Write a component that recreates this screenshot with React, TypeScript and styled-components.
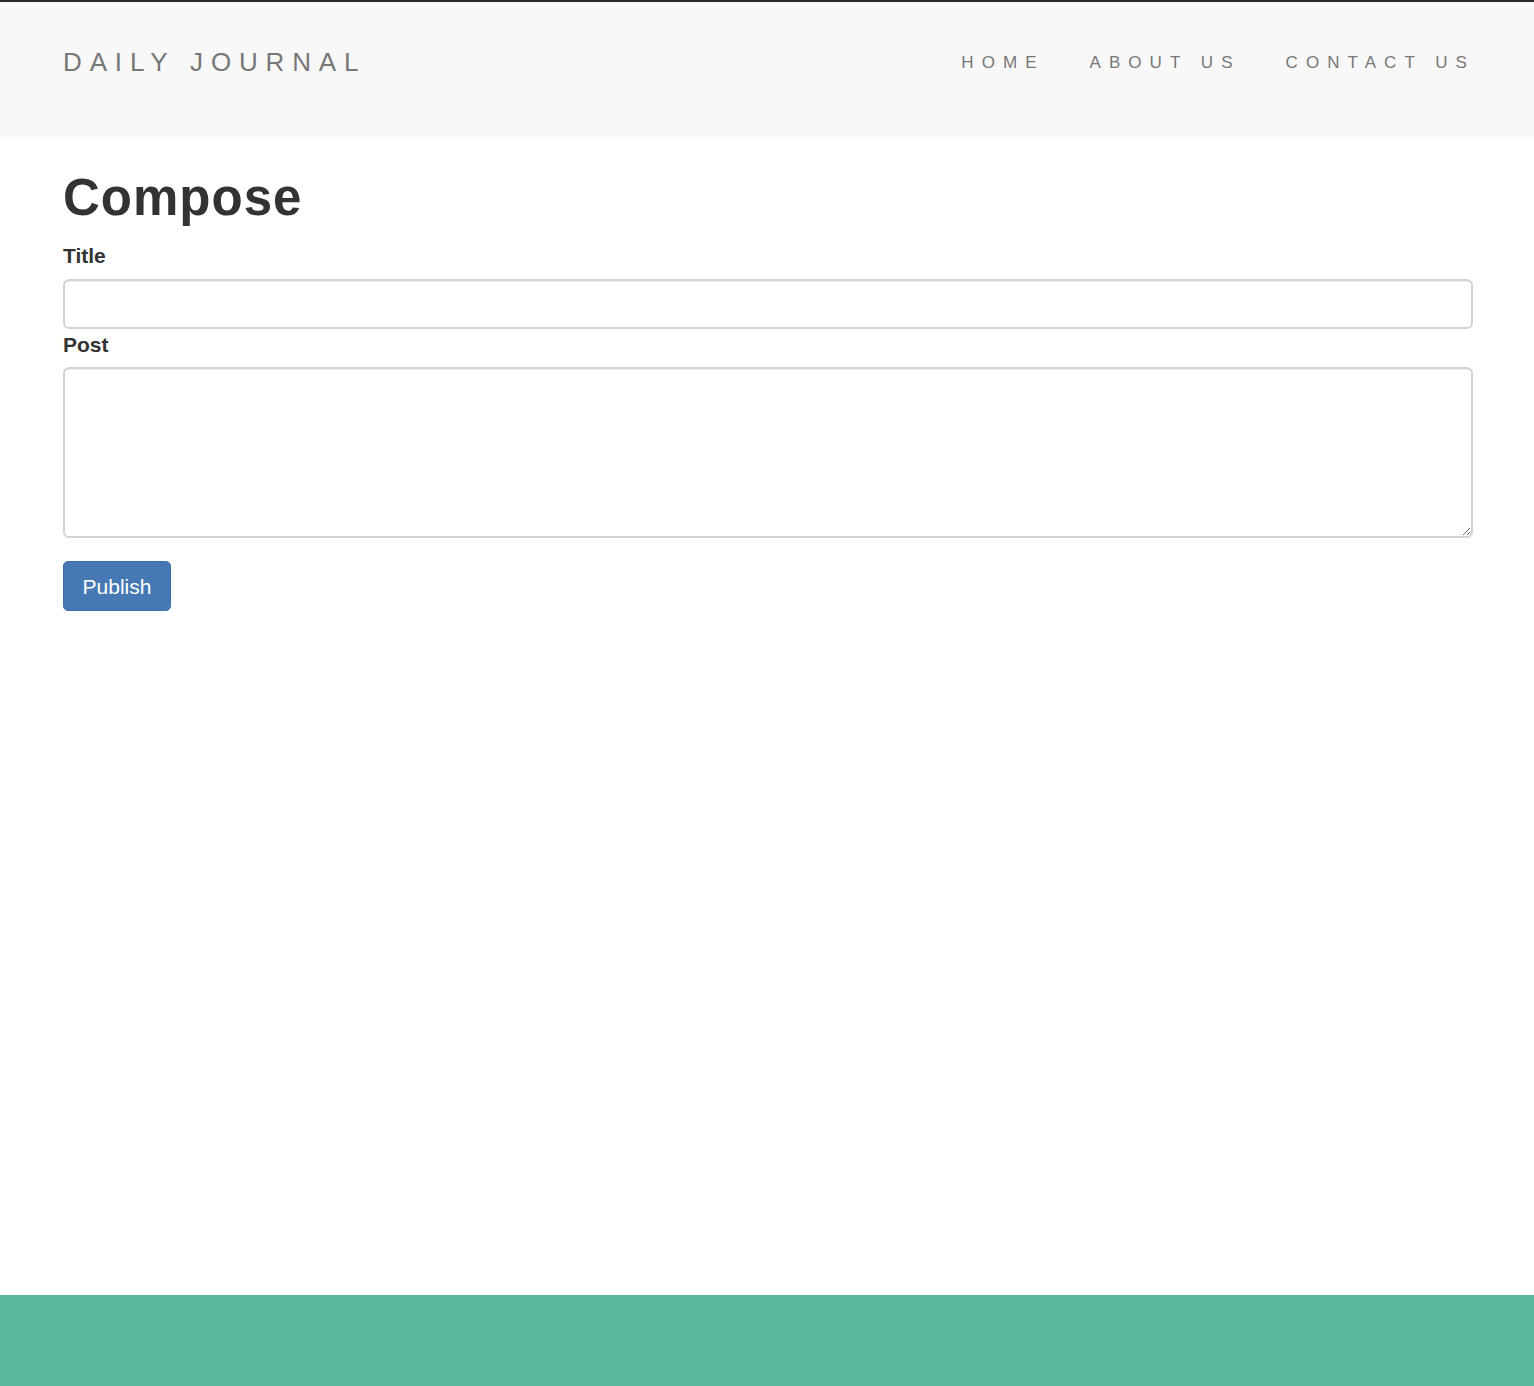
import React from "react";
import styled, { createGlobalStyle } from "styled-components";

const GlobalStyle = createGlobalStyle`
  html, body {
    margin: 0;
    padding: 0;
    background: #ffffff;
    font-family: "Liberation Sans", Arial, Helvetica, sans-serif;
    color: #333333;
  }
  * { box-sizing: border-box; }
`;

const Page = styled.div`
  min-height: 100vh;
  display: flex;
  flex-direction: column;
`;

const Header = styled.header`
  background: #f8f8f8;
  border-top: 2px solid #2a2a2a;
  height: 137px;
  padding: 47px 59px 0 63px;
`;

const HeaderRow = styled.div`
  display: flex;
  align-items: center;
  justify-content: space-between;
  height: 26px;
`;

const Brand = styled.a`
  font-size: 26px;
  line-height: 26px;
  letter-spacing: 7.85px;
  color: #777777;
  text-decoration: none;
  text-transform: uppercase;
  white-space: nowrap;
`;

const Nav = styled.nav`
  display: flex;
  align-items: center;
  gap: 45px;
`;

const NavLink = styled.a`
  font-size: 17px;
  line-height: 17px;
  letter-spacing: 8.05px;
  color: #777777;
  text-decoration: none;
  text-transform: uppercase;
  white-space: nowrap;
`;

const Main = styled.main`
  flex: 1;
  padding: 33px 61px 0 63px;
`;

const Heading = styled.h1`
  margin: 0 0 17px;
  font-size: 51px;
  line-height: 55px;
  font-weight: 700;
  letter-spacing: 1px;
  color: #333333;
`;

const Form = styled.form`
  display: flex;
  flex-direction: column;
`;

const FieldGroup = styled.div<{ $gapAfter: number }>`
  display: flex;
  flex-direction: column;
  margin-bottom: ${(p) => p.$gapAfter}px;
`;

const Label = styled.label`
  font-size: 21px;
  line-height: 28.6px;
  font-weight: 700;
  color: #333333;
  margin-bottom: 8px;
`;

const fieldBase = `
  width: 100%;
  border: 2px solid #d2d2d2;
  border-radius: 6px;
  background: #ffffff;
  box-shadow: inset 0 1px 1px rgba(0, 0, 0, 0.075);
  font-family: "Liberation Sans", Arial, sans-serif;
  font-size: 20px;
  color: #555555;
  padding: 8px 14px;
  outline: none;
`;

const TextInput = styled.input`
  ${fieldBase}
  height: 50px;
`;

const TextArea = styled.textarea`
  ${fieldBase}
  height: 171px;
  resize: vertical;
  display: block;
`;

const PublishButton = styled.button`
  align-self: flex-start;
  width: 108px;
  height: 50px;
  border: 1px solid #3f6fa8;
  border-radius: 5px;
  background: #4679b4;
  color: #ffffff;
  font-family: "Liberation Sans", Arial, sans-serif;
  font-size: 21px;
  line-height: 1;
  cursor: pointer;
  padding: 0;
`;

const Footer = styled.footer`
  height: 91px;
  background: #5ab99c;
`;

export default function App() {
  return (
    <>
      <GlobalStyle />
      <Page>
        <Header>
          <HeaderRow>
            <Brand href="#">Daily Journal</Brand>
            <Nav>
              <NavLink href="#">Home</NavLink>
              <NavLink href="#">About Us</NavLink>
              <NavLink href="#">Contact Us</NavLink>
            </Nav>
          </HeaderRow>
        </Header>
        <Main>
          <Heading>Compose</Heading>
          <Form onSubmit={(e) => e.preventDefault()}>
            <FieldGroup $gapAfter={2}>
              <Label htmlFor="title">Title</Label>
              <TextInput id="title" type="text" />
            </FieldGroup>
            <FieldGroup $gapAfter={23}>
              <Label htmlFor="post">Post</Label>
              <TextArea id="post" />
            </FieldGroup>
            <PublishButton type="submit">Publish</PublishButton>
          </Form>
        </Main>
        <Footer />
      </Page>
    </>
  );
}
